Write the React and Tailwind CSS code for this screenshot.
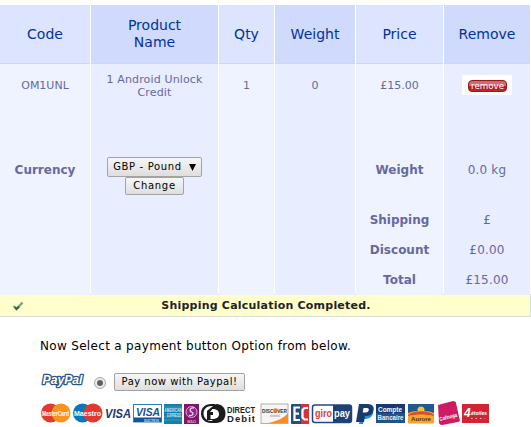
const columns = [
  { label: 'Code', head: 'bg-[#dce4ff]', body: 'bg-[#eff3ff]' },
  { label: 'Product Name', head: 'bg-[#d0dafd]', body: 'bg-[#e8edff]' },
  { label: 'Qty', head: 'bg-[#dce4ff]', body: 'bg-[#eff3ff]' },
  { label: 'Weight', head: 'bg-[#d0dafd]', body: 'bg-[#e8edff]' },
  { label: 'Price', head: 'bg-[#dce4ff]', body: 'bg-[#eff3ff]' },
  { label: 'Remove', head: 'bg-[#d0dafd]', body: 'bg-[#e8edff]' },
];

const gridCols = 'grid grid-cols-[90px_127px_55px_80px_87px_86px] gap-x-px';

function RemoveIcon() {
  return (
    <svg width="50" height="20" viewBox="0 0 50 20">
      <defs>
        <linearGradient id="red" x1="0" y1="0" x2="0" y2="1">
          <stop offset="0" stopColor="#c9666c" />
          <stop offset="0.45" stopColor="#cf747a" />
          <stop offset="0.5" stopColor="#b3121c" />
          <stop offset="1" stopColor="#c22a33" />
        </linearGradient>
      </defs>
      <rect width="50" height="20" fill="#fff" />
      <rect x="6.5" y="5.5" width="38" height="11" rx="3.5" fill="url(#red)" stroke="#9c1822" />
      <text x="9" y="14" fontSize="9.5" fill="#fff" textLength="33" lengthAdjust="spacingAndGlyphs">remove</text>
    </svg>
  );
}

function PayPalLogo() {
  return (
    <svg width="46" height="18" viewBox="0 0 46 18" fontFamily="Liberation Sans, sans-serif" fontWeight="bold" fontStyle="italic">
      <text x="2.500" y="11" fontSize="12" fill="#fff" stroke="#2b5687" strokeWidth="2.600" strokeLinejoin="round" paintOrder="stroke" textLength="40" lengthAdjust="spacingAndGlyphs">PayPal</text>
    </svg>
  );
}

function CardStrip() {
  return (
    <svg className="block" width="451" height="26" viewBox="0 0 451 26" fontFamily="Liberation Sans, sans-serif" fontWeight="bold">
      {/* MasterCard */}
      <circle cx="10.5" cy="13" r="9.5" fill="#e5392e" />
      <circle cx="21" cy="13" r="9.5" fill="#f7941d" />
      <text x="2" y="15.5" fontSize="6.5" fill="#fff" textLength="27" lengthAdjust="spacingAndGlyphs">MasterCard</text>
      {/* Maestro */}
      <circle cx="42.5" cy="13" r="9.5" fill="#0878bd" />
      <circle cx="53" cy="13" r="9.5" fill="#e4382f" />
      <text x="34" y="16" fontSize="8" fill="#fff" textLength="27" lengthAdjust="spacingAndGlyphs">Maestro</text>
      {/* Visa */}
      <text x="65" y="18" fontSize="12.5" fontStyle="italic" fill="#1b376f" textLength="26" lengthAdjust="spacingAndGlyphs">VISA</text>
      {/* Visa Electron */}
      <rect x="93.5" y="4.5" width="28" height="17.5" fill="#fff" stroke="#327fb2" />
      <rect x="94" y="17.5" width="27" height="4.5" fill="#14559a" />
      <text x="96" y="15.5" fontSize="11.5" fontStyle="italic" fill="#174e94" textLength="24" lengthAdjust="spacingAndGlyphs">VISA</text>
      <text x="104" y="21.5" fontSize="3.5" fill="#a9c9e8" textLength="15">ELECTRON</text>
      {/* American Express */}
      <rect x="124" y="4" width="18" height="20" fill="#147fae" />
      <path d="M124 17h18M124 20h18M124 7h18" stroke="#3d9ac0" />
      <text x="124.5" y="12" fontSize="4.5" fill="#c9ecf6" textLength="17" lengthAdjust="spacingAndGlyphs">AMERICAN</text>
      <text x="127" y="16.5" fontSize="4.5" fill="#c9ecf6" textLength="14" lengthAdjust="spacingAndGlyphs">EXPRESS</text>
      {/* Solo */}
      <rect x="144" y="4" width="15" height="20" fill="#7c176c" />
      <circle cx="151.5" cy="12" r="5.5" fill="#942584" stroke="#dda8d3" strokeWidth="1" />
      <path d="M154 8c-4-1-5 3-2.500 4s2 4-2.500 3.500" fill="none" stroke="#f6d6ee" strokeWidth="1.300" />
      <text x="147" y="22.500" fontSize="4" fill="#e4a9d7" textLength="9">SOLO</text>
      {/* Direct Debit */}
      <path d="M171 4c-6 0-10 4-10 9.500s4 9.500 10 9.500h4V4z" fill="#1b1b1b" />
      <path d="M171.500 6c-5 0-8 3.500-8 7.500s3 7.500 8 7.500h2V6z" fill="#fff" />
      <path d="M167 20V11l6-5 3-2c6 0 9.500 4 9.500 9.500S182 23 176 23h-2l-2-3z" fill="#1b1b1b" />
      <path d="M172.500 9c5 0 6.500 2.500 6.500 5s-1.500 5-6.500 5h-2v-4h2.500V12h-3z" fill="#fff" />
      <text x="187" y="13" fontSize="9" fill="#222" textLength="28" lengthAdjust="spacingAndGlyphs">DIRECT</text>
      <text x="187" y="21.500" fontSize="9.500" fill="#222" textLength="28" lengthAdjust="spacing">Debit</text>
      {/* Discover */}
      <rect x="221" y="4" width="27" height="19.500" fill="#f6f5f4" stroke="#b1adb0" />
      <path d="M248 13v10h-20c10-2 16-5 20-10z" fill="#f78c20" />
      <text x="222" y="12.500" fontSize="6" fill="#333" textLength="25" lengthAdjust="spacingAndGlyphs">DISCOVER</text>
      <circle cx="235.500" cy="10.500" r="2.200" fill="#ef7b20" />
      <path d="M230 16h10" stroke="#888" strokeWidth=".8" />
      {/* Electronic Cash */}
      <rect x="251" y="4" width="18" height="20" rx="1" fill="#244e7c" />
      <path d="M261 4h7a1 1 0 0 1 1 1v18a1 1 0 0 1-1 1h-7z" fill="#da3037" />
      <path d="M260 7.500h-5.500v12.500h5.500M254 13.700h5" fill="none" stroke="#fff" strokeWidth="2.200" />
      <path d="M268 8h-3.500l-2 2v7.500l2 2H268" fill="none" stroke="#fff" strokeWidth="2.200" />
      {/* Giropay */}
      <rect x="272.500" y="5" width="39" height="17.500" rx="2.500" fill="#fff" stroke="#24477f" strokeWidth="1.500" />
      <path d="M293 5h16a2.500 2.500 0 0 1 2.500 2.500v12.500a2.500 2.500 0 0 1-2.500 2.500h-16z" fill="#1d407b" />
      <text x="275" y="16.500" fontSize="10.500" fill="#d83a43" textLength="17" lengthAdjust="spacingAndGlyphs">giro</text>
      <text x="294" y="16.500" fontSize="10.500" fill="#fff" textLength="16" lengthAdjust="spacingAndGlyphs">pay</text>
      {/* PayPal monogram */}
      <path d="M331 8c4 2 3 10-5 11h-2l-1 5h-4l1-5z" fill="#278fcb" />
      <path d="M319 4h9c5 0 7 4 5 8-1.500 3-4 4-8 4l-1 6h-8z" fill="#173a70" />
      <path d="M323.500 8h3.500c3 0 2 4.500-1 4.500h-3.300z" fill="#fff" />
      {/* Compte Bancaire */}
      <rect x="336" y="4" width="29" height="19" fill="#173a6e" />
      <path d="M336 13h29v10h-29z" fill="#235284" />
      <text x="338" y="11.500" fontSize="8" fill="#fff" textLength="24" lengthAdjust="spacingAndGlyphs">Compte</text>
      <text x="337.500" y="20" fontSize="7.500" fill="#e5f1f8" textLength="26" lengthAdjust="spacingAndGlyphs">Bancaire</text>
      {/* Aurore */}
      <rect x="368" y="4" width="26" height="19.500" fill="#f8a52a" />
      <path d="M368 4h26v9c-7-3-19-3-26 0z" fill="#205890" />
      <circle cx="381" cy="10" r="3.500" fill="#f2c43c" />
      <path d="M368 15c6-5 20-5 26 0v1c-7-2-19-2-26 0z" fill="#d84d2b" />
      <text x="371" y="21" fontSize="6" fill="#5b2e2a" textLength="20" lengthAdjust="spacingAndGlyphs">Aurore</text>
      {/* Cofinoga */}
      <path d="M398 5l15-4c2 0 3 1 3 2l4 18-2 1-16 3c-2 0-3-1-3-3z" fill="#cd1c62" />
      <text x="400" y="21" transform="rotate(-14 400 21)" fontSize="5.500" fill="#fff" textLength="18" lengthAdjust="spacingAndGlyphs">Cofinoga</text>
      {/* 4 etoiles */}
      <rect x="422" y="4" width="27" height="19" fill="#d22531" />
      <text x="424" y="17" fontSize="12" fontStyle="italic" fill="#fff">4</text>
      <text x="431" y="15" fontSize="5" fontStyle="italic" fill="#fff" textLength="16" lengthAdjust="spacingAndGlyphs">étoiles</text>
      <path d="M431 18.500h14" stroke="#fbd" strokeDasharray="1.500 3" />
    </svg>
  );
}

const control =
  'flex items-center justify-center rounded-[2px] border border-[#a3a3a3] bg-gradient-to-b from-[#f6f6f6] to-[#dedede] text-black text-[10px] leading-none';

export default function App() {
  return (
    <div className="h-[427px] w-[531px] overflow-hidden bg-white pt-[5px] text-[#6669a0] [font-family:'DejaVu_Sans',Verdana,sans-serif]">
      <div className={gridCols}>
        {columns.map((c) => (
          <div key={c.label} className={`flex h-[59px] items-center justify-center border-b border-[#ccd6f5] px-6 text-center text-[14px] leading-[17px] text-[#003399] ${c.head}`}>
            {c.label}
          </div>
        ))}
      </div>

      <div className={`${gridCols} h-[230px] text-center text-[12px]`}>
        <div className={columns[0].body}>
          <div className="flex h-[43px] items-center justify-center pt-px text-[11px]">OM1UNL</div>
          <div className="mt-[48px] flex h-[30px] items-center justify-center font-bold">Currency</div>
        </div>
        <div className={columns[1].body}>
          <div className="flex h-[43px] items-center justify-center text-[11px] leading-[13px] tracking-[0.15px]">
            <span>1 Android Unlock<br />Credit</span>
          </div>
          <div className="mt-[50px] flex flex-col items-center">
            <div className={`${control} h-5 w-[95px] gap-[7px] tracking-[0.65px]`}>
              GBP - Pound
              <svg width="7" height="7" viewBox="0 0 7 7"><path d="M0 0h7L3.500 7z" fill="#000" /></svg>
            </div>
            <button className={`${control} h-[18px] w-[59px] tracking-[0.7px]`}>Change</button>
          </div>
        </div>
        <div className={columns[2].body}>
          <div className="flex h-[43px] items-center justify-center pt-px text-[11px]">1</div>
        </div>
        <div className={columns[3].body}>
          <div className="flex h-[43px] items-center justify-center pt-px text-[11px]">0</div>
        </div>
        <div className={columns[4].body}>
          <div className="flex h-[43px] items-center justify-center pt-px text-[11px]">£15.00</div>
          <div className="mt-[48px] flex h-[30px] items-center justify-center font-bold">Weight</div>
          <div className="mt-5 flex h-[30px] items-center justify-center font-bold">Shipping</div>
          <div className="flex h-[30px] items-center justify-center font-bold">Discount</div>
          <div className="flex h-[30px] items-center justify-center font-bold">Total</div>
        </div>
        <div className={columns[5].body}>
          <div className="flex h-[43px] items-center justify-center pb-px"><RemoveIcon /></div>
          <div className="mt-[48px] flex h-[30px] items-center justify-center tracking-[0.2px]">0.0 kg</div>
          <div className="mt-5 flex h-[30px] items-center justify-center">£</div>
          <div className="flex h-[30px] items-center justify-center tracking-[0.2px]">£0.00</div>
          <div className="flex h-[30px] items-center justify-center tracking-[0.2px]">£15.00</div>
        </div>
      </div>

      <div className="flex h-[23px] items-center border-y border-r border-[#dcdcdc] bg-[#ffffcc] text-[11px] font-bold text-[#222]">
        <svg className="ml-3 shrink-0" width="12" height="10" viewBox="0 0 12 10">
          <path d="M1.500 5l3 3L10.500 1.500" fill="none" stroke="#7ba58c" strokeWidth="2.400" />
          <path d="M3 6l1.500 2L7 5.500" fill="none" stroke="#2c6847" strokeWidth="2" />
        </svg>
        <span className="flex-1 pt-[2px] pr-[22px] text-center tracking-[0.22px]">Shipping Calculation Completed.</span>
      </div>

      <div className="pl-10">
        <p className="mt-5 h-[18px] text-[12px] leading-[18px] tracking-[0.32px] text-black">Now Select a payment button Option from below.</p>
        <div className="mt-[18px] flex h-[18px] items-center">
          <PayPalLogo />
          <div className="ml-2 mt-[2px] flex size-3 items-center justify-center rounded-full border border-[#a5a5a5] bg-[#eeeeee]">
            <div className="size-[6px] rounded-full bg-[#606060]" />
          </div>
          <button className={`${control} ml-2 h-[18px] w-[131px] tracking-[0.5px]`}>Pay now with Paypal!</button>
        </div>
        <div className="mt-[9px]"><CardStrip /></div>
      </div>
    </div>
  );
}
